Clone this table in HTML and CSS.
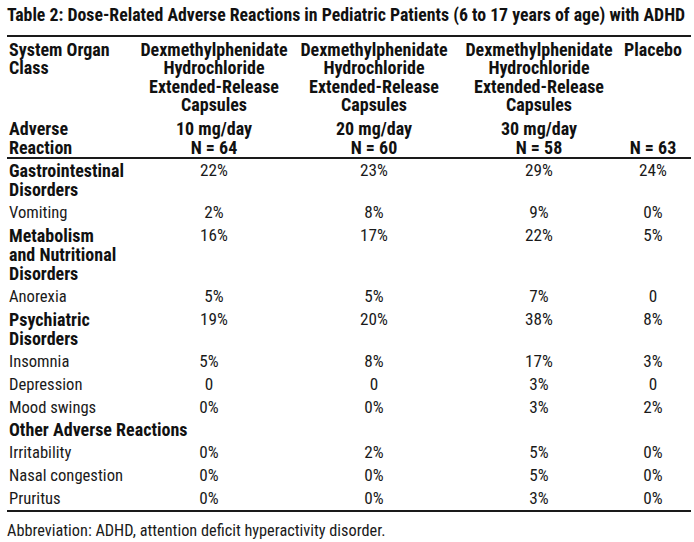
FILE: index.html
```html
<!DOCTYPE html>
<html lang="en">
<head>
<meta charset="utf-8">
<title>Table 2</title>
<link rel="stylesheet" href="styles.css">
</head>
<body>
<div class="page">
  <h1 class="title">Table 2: Dose-Related Adverse Reactions in Pediatric Patients (6 to 17 years of age) with ADHD</h1>
  <table class="ae-table">
    <colgroup>
      <col class="c-label">
      <col class="c-10">
      <col class="c-20">
      <col class="c-30">
      <col class="c-pl">
    </colgroup>
    <thead>
      <tr class="head-a">
        <th class="lbl">System Organ<br>Class</th>
        <th>Dexmethylphenidate<br>Hydrochloride<br>Extended-Release<br>Capsules</th>
        <th>Dexmethylphenidate<br>Hydrochloride<br>Extended-Release<br>Capsules</th>
        <th>Dexmethylphenidate<br>Hydrochloride<br>Extended-Release<br>Capsules</th>
        <th class="pl">Placebo</th>
      </tr>
      <tr class="head-b">
        <th class="lbl">Adverse<br>Reaction</th>
        <th>10 mg/day<br>N = 64</th>
        <th>20 mg/day<br>N = 60</th>
        <th>30 mg/day<br>N = 58</th>
        <th class="pl">N = 63</th>
      </tr>
    </thead>
    <tbody>
      <tr><td class="lbl soc">Gastrointestinal<br>Disorders</td><td>22%</td><td>23%</td><td>29%</td><td class="pl">24%</td></tr>
      <tr><td class="lbl">Vomiting</td><td>2%</td><td>8%</td><td>9%</td><td class="pl">0%</td></tr>
      <tr><td class="lbl soc">Metabolism<br>and Nutritional<br>Disorders</td><td>16%</td><td>17%</td><td>22%</td><td class="pl">5%</td></tr>
      <tr><td class="lbl">Anorexia</td><td>5%</td><td>5%</td><td>7%</td><td class="pl">0</td></tr>
      <tr><td class="lbl soc">Psychiatric<br>Disorders</td><td>19%</td><td>20%</td><td>38%</td><td class="pl">8%</td></tr>
      <tr><td class="lbl">Insomnia</td><td class="shift">5%</td><td>8%</td><td>17%</td><td class="pl">3%</td></tr>
      <tr><td class="lbl">Depression</td><td class="shift">0</td><td>0</td><td>3%</td><td class="pl">0</td></tr>
      <tr><td class="lbl">Mood swings</td><td class="shift">0%</td><td>0%</td><td>3%</td><td class="pl">2%</td></tr>
      <tr><td class="lbl soc" colspan="5">Other Adverse Reactions</td></tr>
      <tr><td class="lbl">Irritability</td><td class="shift">0%</td><td>2%</td><td>5%</td><td class="pl">0%</td></tr>
      <tr><td class="lbl">Nasal congestion</td><td class="shift">0%</td><td>0%</td><td>5%</td><td class="pl">0%</td></tr>
      <tr><td class="lbl">Pruritus</td><td class="shift">0%</td><td>0%</td><td>3%</td><td class="pl">0%</td></tr>
    </tbody>
  </table>
  <p class="note">Abbreviation: ADHD, attention deficit hyperactivity disorder.</p>
</div>
</body>
</html>
```
FILE: styles.css
```css
html, body {
  margin: 0;
  padding: 0;
  background: #ffffff;
}

body {
  font-family: "Roboto Condensed", Roboto, "Liberation Sans", sans-serif;
  font-stretch: 75%;
  font-size: 17.2px;
  font-weight: 400;
  color: #1a1a1a;
}

.page {
  width: 684px;
  padding: 5px 3px 0 7px;
}

.title {
  margin: 0 0 11px 0;
  font-size: 17.8px;
  line-height: 19.2px;
  font-weight: bold;
  color: #111111;
  white-space: nowrap;
}

.ae-table {
  width: 684px;
  border-collapse: collapse;
  table-layout: fixed;
  border-top: 2px solid #1a1a1a;
  border-bottom: 2px solid #1a1a1a;
}

.c-label { width: 129px; }
.c-10 { width: 156px; }
.c-20 { width: 164px; }
.c-30 { width: 166px; }
.c-pl { width: 69px; }

.ae-table th,
.ae-table td {
  padding: 0;
  text-align: center;
  white-space: nowrap;
}

.ae-table th {
  font-size: 18px;
  font-weight: bold;
  line-height: 18.5px;
  color: #111111;
}

.ae-table .lbl {
  text-align: left;
  padding-left: 2px;
}

.ae-table .pl {
  padding-right: 7px;
}

.head-a th {
  vertical-align: top;
  padding-top: 3.5px;
  padding-bottom: 3px;
}

.head-b th {
  vertical-align: bottom;
  padding-top: 2.5px;
  padding-bottom: 0;
  border-bottom: 2px solid #1a1a1a;
}

.ae-table td {
  vertical-align: top;
  line-height: 19.2px;
  padding-top: 2px;
  padding-bottom: 1.6px;
}

.ae-table td.lbl {
  font-size: 16.6px;
}

.ae-table td.soc {
  font-size: 18px;
  font-weight: bold;
  color: #111111;
}

.ae-table td.shift {
  padding-right: 10px;
}

.note {
  margin: 9px 0 0 0;
  font-size: 16.3px;
  line-height: 19.2px;
}
```
